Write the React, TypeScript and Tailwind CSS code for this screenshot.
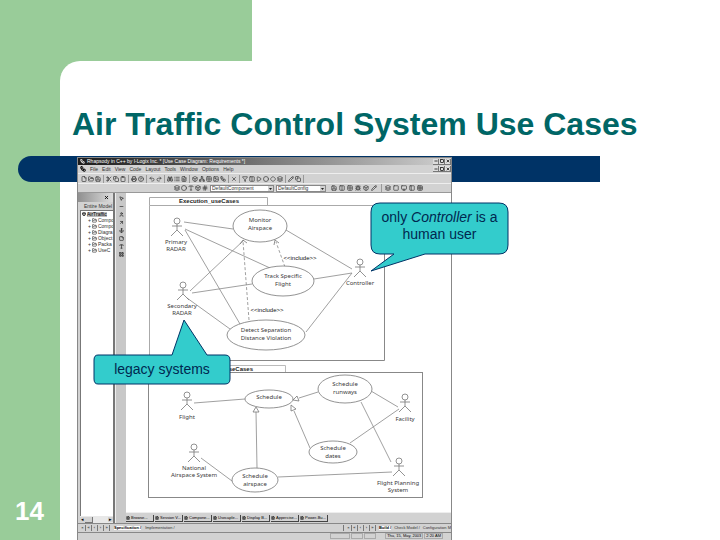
import React from 'react';
import {
  File, FolderOpen, Save, Scissors, Copy, Clipboard, Printer, HelpCircle, Undo2, Redo2, Binoculars,
  List, FileText, Box, Network, Grid2x2, Image as ImageIcon, Workflow, X, Filter, Columns2, Play, Circle,
  Square, Diamond, Pencil, MousePointer2, Minus, User, ArrowUpRight, Layers, Anchor, StickyNote, Type,
  LayoutGrid, Table, Hash, PanelLeft, Bug, Monitor,
} from 'lucide-react';

type Icon = React.ComponentType<{ className?: string; strokeWidth?: number }>;
type Point = [number, number];

const menus = ['File', 'Edit', 'View', 'Code', 'Layout', 'Tools', 'Window', 'Options', 'Help'];

const mainTools: { name: string; icons: Icon[] }[] = [
  { name: 'File', icons: [File, FolderOpen, Save] },
  { name: 'Clipboard', icons: [Scissors, Copy, Clipboard] },
  { name: 'Print', icons: [Printer, HelpCircle] },
  { name: 'History', icons: [Undo2, Redo2] },
  { name: 'Search', icons: [Binoculars, List, FileText] },
  { name: 'Diagrams', icons: [Box, Network, Grid2x2, ImageIcon, Workflow] },
  { name: 'Close', icons: [X] },
  { name: 'Arrange', icons: [Filter, Columns2, Play, Circle, Diamond, Layers] },
  { name: 'Edit', icons: [Pencil, Copy] },
];

const buildTools: Icon[] = [Save, Columns2, Grid2x2, Bug, Box, Pencil];
const viewTools: Icon[] = [Layers, Square, Monitor, PanelLeft, Table];
const drawTools: Icon[] = [MousePointer2, Minus, User, ArrowUpRight, Anchor, StickyNote, Type, LayoutGrid];
const tree = ['Compo', 'Compo', 'Diagra', 'Object', 'Packa', 'UseC'];
const openWindows = ['Browse...', 'Session V...', 'Compone...', 'Usecaple...', 'Display B...', 'Appercise...', 'Power-Bu...'];

const ToolButton = ({ icon: Glyph, label }: { icon: Icon; label: string }) => (
  <button type="button" aria-label={label} className="flex h-2 w-[7px] items-center justify-center text-[#444]">
    <Glyph className="h-[6px] w-[6px]" strokeWidth={3} />
  </button>
);

const WindowButtons = () => (
  <div className="flex text-[#222]">
    {[Minus, Square, X].map((Glyph, i) => (
      <button key={i} type="button" aria-label={['Minimize', 'Restore', 'Close'][i]} className="flex h-[6px] w-[6px] items-center justify-center border-r border-b border-[#777] bg-[#ddd]">
        <Glyph className="h-1 w-1" strokeWidth={5} />
      </button>
    ))}
  </div>
);

const PageButtons = () => (
  <span className="flex">
    {['×', '«', '‹', '›', '»'].map((c) => (
      <button key={c} type="button" className="h-[6px] w-[6px] border-r border-[#777] text-black">{c}</button>
    ))}
  </span>
);

const Picker = ({ label, value }: { label: string; value: string }) => (
  <div className="flex h-[7px] border border-[#888] bg-white">
    <select aria-label={label} className="w-full appearance-none bg-white pl-px">
      <option>{value}</option>
    </select>
    <svg viewBox="0 0 5 5" className="h-[5px] w-[5px] shrink-0 bg-[#d2d2d2]" aria-hidden="true">
      <path d="M1 2h3L2.500 4z" fill="#222" />
    </svg>
  </div>
);

/* ---- Diagram ---- */

const Label = ({ x, y, lines, step = 8 }: { x: number; y: number; lines: string[]; step?: number }) => (
  <text textAnchor="middle" fill="#3a3a3a">
    {lines.map((line, i) => (
      <tspan key={line} x={x} y={y + i * step}>{line}</tspan>
    ))}
  </text>
);

const Actor = ({ x, y, labelY, labelX = x, lines }: { x: number; y: number; labelY: number; labelX?: number; lines: string[] }) => (
  <g>
    <g fill="none" stroke="#777" strokeWidth="0.8">
      <circle cx={x} cy={y} r="3" />
      <path d={`M${x} ${y + 3}v6M${x - 5} ${y + 5}h10M${x - 6} ${y + 15}l6 -6l6 6`} />
    </g>
    <Label x={labelX} y={labelY} lines={lines} step={7} />
  </g>
);

const UseCase = ({ cx, cy, rx, ry, y, lines }: { cx: number; cy: number; rx: number; ry: number; y: number; lines: string[] }) => (
  <g>
    <ellipse cx={cx} cy={cy} rx={rx} ry={ry} fill="white" stroke="#777" strokeWidth="0.8" />
    <Label x={cx} y={y} lines={lines} />
  </g>
);

const links: [Point, Point][] = [
  [[184, 222], [233, 229]],
  [[185, 229], [270, 268]],
  [[185, 230], [240, 324]],
  [[190, 291], [244, 240]],
  [[192, 293], [252, 284]],
  [[187, 298], [230, 329]],
  [[286, 230], [352, 269]],
  [[314, 279], [352, 273]],
  [[306, 332], [352, 273]],
  [[194, 403], [245, 399]],
  [[201, 458], [232, 481]],
  [[257, 468], [256, 412]],
  [[310, 448], [294, 411]],
  [[318, 392], [299, 398]],
  [[371, 391], [398, 407]],
  [[350, 443], [399, 409]],
  [[361, 402], [391, 462]],
  [[278, 477], [392, 472]],
];

const Diagram = () => (
  <svg
    viewBox="126 193 325 319"
    preserveAspectRatio="xMinYMin meet"
    className="block h-[319px] w-full bg-white font-['Noto_Sans','Liberation_Sans',sans-serif] text-[6px]"
    role="img"
    aria-label="Use case diagram"
  >
    <g fill="none" stroke="#999">
      <path d="M149.500 205.500V197.500H267.500V205.500" stroke="#aaa" />
      <path d="M149.500 360.500V205.500H384.500" stroke="#aaa" />
      <path d="M384.500 205.500V360.500H149.500" stroke="#888" />
      <path d="M149.500 372.500V365.500H285.500V372.500" stroke="#bbb" />
      <rect x="148.500" y="372.500" width="274" height="125" stroke="#888" />
    </g>
    <g fontWeight="bold" fill="#222" className="font-['Liberation_Sans',sans-serif]">
      <text x="209" y="203" textAnchor="middle">Execution_useCases</text>
      <text x="253" y="371" textAnchor="end">useCases</text>
    </g>

    <g stroke="#888" strokeWidth="0.8">
      {links.map(([a, b], i) => (
        <line key={i} x1={a[0]} y1={a[1]} x2={b[0]} y2={b[1]} />
      ))}
      <path d="M285 267L276 242M249 320L243 241" strokeDasharray="3 2" fill="none" />
    </g>

    <UseCase cx={260} cy={226} rx={27} ry={16} y={222} lines={['Monitor', 'Airspace']} />
    <UseCase cx={283} cy={281} rx={31} ry={15} y={278} lines={['Track Specific', 'Flight']} />
    <UseCase cx={266} cy={335} rx={39} ry={15} y={332} lines={['Detect Separation', 'Distance Violation']} />
    <UseCase cx={269} cy={399} rx={24} ry={9} y={399} lines={['Schedule']} />
    <UseCase cx={345} cy={389} rx={27} ry={14} y={386} lines={['Schedule', 'runways']} />
    <UseCase cx={333} cy={452} rx={24} ry={11} y={450} lines={['Schedule', 'dates']} />
    <UseCase cx={255} cy={480} rx={23} ry={12} y={478} lines={['Schedule', 'airspace']} />

    {/* arrow heads */}
    <g fill="white" stroke="#777" strokeWidth="0.8">
      <path d="M256 407l-3 5h6z" />
      <path d="M291 405l0 6l5 -2z" />
      <path d="M293 400l4 -4l2 5z" />
      <path d="M240 244l3 -4l4 3M274 245l1 -5l4 3" fill="none" />
    </g>

    <Actor x={177} y={221} labelX={176} labelY={244} lines={['Primary', 'RADAR']} />
    <Actor x={183} y={285} labelX={182} labelY={308} lines={['Secondary', 'RADAR']} />
    <Actor x={360} y={262} labelY={285} lines={['Controller']} />
    <Actor x={187} y={395} labelY={419} lines={['Flight']} />
    <Actor x={405} y={397} labelY={421} lines={['Facility']} />
    <Actor x={194} y={447} labelY={470} lines={['National', 'Airspace System']} />
    <Actor x={399} y={461} labelX={398} labelY={485} lines={['Flight Planning', 'System']} />

    <g fill="#111" textAnchor="middle" className="font-['Liberation_Sans',sans-serif]">
      <text x="300" y="260">{'<<include>>'}</text>
      <text x="267" y="312">{'<<include>>'}</text>
    </g>
  </svg>
);

/* ---- Modelling tool window ---- */

const AppWindow = () => (
  <div className="relative flex w-full max-w-[375px] flex-1 flex-col border-x border-t border-[#888] bg-[#d2d2d2] font-['Liberation_Sans',sans-serif] text-[5px] leading-none text-[#333]">
    <div className="flex h-[7px] items-center justify-between bg-linear-to-r from-[#1c1c1c] via-[#777] to-[#d0d0d0] pl-[2px] text-white">
      <span className="flex items-center gap-[2px] whitespace-nowrap">
        <Workflow className="h-[5px] w-[5px]" strokeWidth={3} />
        Rhapsody in C++ by I-Logix Inc. * [Use Case Diagram: Requirements *]
      </span>
      <WindowButtons />
    </div>

    <div className="flex h-2 items-center justify-between pl-[2px]">
      <nav className="flex items-center gap-1">
        <Workflow className="h-[6px] w-[6px] text-black" strokeWidth={4} />
        {menus.map((m) => (
          <button key={m} type="button">{m}</button>
        ))}
      </nav>
      <WindowButtons />
    </div>

    <div className="flex h-[10px] items-center border-t border-[#eee] pl-[2px]">
      {mainTools.map((group) => (
        <div key={group.name} className="mr-px flex border-r border-[#999] pr-[2px]">
          {group.icons.map((icon, i) => (
            <ToolButton key={i} icon={icon} label={`${group.name} ${i + 1}`} />
          ))}
        </div>
      ))}
    </div>

    <div className="flex h-[10px] items-center gap-[2px] border-y border-t-[#eee] border-b-[#999] pl-[95px]">
      <div className="flex">
        {[Layers, Circle, Type, Box, Hash].map((icon, i) => (
          <ToolButton key={i} icon={icon} label={`Run ${i + 1}`} />
        ))}
      </div>
      <div className="w-[64px]">
        <Picker label="Component" value="DefaultComponent" />
      </div>
      <div className="w-[50px]">
        <Picker label="Configuration" value="DefaultConfig" />
      </div>
      <div className="ml-[2px] flex gap-px border-r border-[#999] pr-1">
        {buildTools.map((icon, i) => (
          <ToolButton key={i} icon={icon} label={`Build ${i + 1}`} />
        ))}
      </div>
      <div className="flex gap-px">
        {viewTools.map((icon, i) => (
          <ToolButton key={i} icon={icon} label={`View ${i + 1}`} />
        ))}
      </div>
    </div>

    <div className="flex">
      <div className="flex w-[37px] shrink-0 flex-col overflow-hidden border-r-2 border-[#777]">
        <div className="flex h-[9px] items-center justify-end bg-linear-to-r from-[#909090] to-[#ddd] pr-1">
          <X className="h-[5px] w-[5px] text-black" strokeWidth={4} />
        </div>
        <div className="flex h-2 items-center pl-[6px] whitespace-nowrap">Entire Model</div>
        <div className="ml-[2px] flex-1 overflow-hidden border-t border-l border-[#777] bg-white">
          <div className="flex h-[6px] items-center gap-px pl-px whitespace-nowrap text-black">
            <Box className="h-1 w-1 shrink-0" strokeWidth={4} />
            <span className="bg-[#bbb]">AirTraffic</span>
          </div>
          <ul className="pl-[7px]">
            {tree.map((item, i) => (
              <li key={i} className="flex h-[6px] items-center gap-px">
                <span>+</span>
                <FolderOpen className="h-[5px] w-[5px] shrink-0" strokeWidth={3} />
                {item}
              </li>
            ))}
          </ul>
        </div>
        <div className="ml-[2px] flex h-[7px] items-center justify-between bg-[#e8e8e8] text-black">
          <span className="flex">
            <span className="bg-[#d2d2d2] px-px">◂</span>
            <span className="h-[6px] w-2 border-r border-b border-[#777] bg-[#d2d2d2]" />
          </span>
          <span className="bg-[#d2d2d2] px-px">▸</span>
        </div>
      </div>

      <div className="flex w-[11px] shrink-0 flex-col items-center gap-px border-l border-[#eee] bg-[#c8c8c8] pt-[2px]">
        {drawTools.map((Glyph, i) => (
          <button key={i} type="button" aria-label={`Draw ${i + 1}`} className="flex h-[7px] w-[7px] items-center justify-center text-[#222]">
            <Glyph className="h-[5px] w-[5px]" strokeWidth={3} />
          </button>
        ))}
      </div>

      <div className="min-w-0 flex-1">
        <Diagram />
        <div className="flex h-[11px] items-center gap-px border-t border-[#eee] text-[4px] text-black">
          {openWindows.map((w) => (
            <button key={w} type="button" className="flex h-[7px] w-7 items-center gap-px border-r border-b border-[#444] whitespace-nowrap">
              <FileText className="h-1 w-1 shrink-0" strokeWidth={3} />
              {w}
            </button>
          ))}
        </div>
      </div>
    </div>

    <div className="flex h-[10px] items-center justify-between overflow-hidden border-y border-[#888] text-[4px] whitespace-nowrap">
      <div className="flex items-center gap-1 pl-[2px]">
        <PageButtons />
        <button type="button" className="bg-white font-bold text-black">Specification /</button>
        <button type="button">Implementation /</button>
      </div>
      <div className="flex items-center gap-[3px] border-l border-[#777] pl-[2px]">
        <PageButtons />
        <button type="button" className="bg-white font-bold text-black">Build /</button>
        <button type="button">Check Model /</button>
        <button type="button">Configuration M</button>
      </div>
    </div>

    <div className="flex flex-1 items-start justify-end gap-px pr-2 text-[4px] text-black">
      <span className="h-[6px] w-5 border border-[#aaa]" />
      <span className="h-[6px] w-3 border border-[#aaa]" />
      <span className="mr-2 h-[6px] w-3 border border-[#aaa]" />
      <span className="border border-[#aaa] px-px">Thu, 15, May, 2003</span>
      <span className="border border-[#aaa] px-px">2:20 AM</span>
    </div>
  </div>
);

export default function App() {
  return (
    <div className="flex min-h-screen flex-col overflow-hidden bg-white font-['Liberation_Sans',Arial,sans-serif]">
      <div className="h-[61px] w-[35%] bg-[#99cc99]" />

      <div className="flex flex-1 bg-[#99cc99]">
        <aside className="flex w-[60px] shrink-0 items-end pb-[13px] pl-[15px]">
          <span className="text-[26px] leading-8 font-bold text-white">14</span>
        </aside>

        <main className="flex min-w-0 flex-1 flex-col rounded-tl-[20px] bg-white pt-[43px]">
          <h1 className="pl-3 text-[32px] leading-10 font-bold text-[#006666]">Air Traffic Control System Use Cases</h1>

          <section className="relative mt-3 flex flex-1 flex-col pt-px pl-[17px]">
            <div className="absolute top-0 right-[120px] -left-[42px] h-[26px] rounded-l-full bg-[#003366]" />
            <AppWindow />

            {/* Callouts sit over the window */}
            <div className="absolute top-[46px] left-[310px] h-[70px] w-[139px] text-[#002850]">
              <svg viewBox="0 0 139 70" className="absolute inset-0 h-full w-full" aria-hidden="true">
                <path d="M10 1H129Q138 1 138 10V43Q138 52 129 52H55L1 69L24 52H10Q1 52 1 43V10Q1 1 10 1Z" fill="#33cccc" stroke="#003366" />
              </svg>
              <p className="relative pt-[7px] text-center text-[14px] leading-[17px]">
                only <em>Controller</em> is a<br />human user
              </p>
            </div>

            <div className="absolute top-[163px] left-[33px] h-[66px] w-[138px] text-[#002850]">
              <svg viewBox="0 0 138 66" className="absolute inset-0 h-full w-full" aria-hidden="true">
                <path d="M5 36H79L91 1L114 36H132Q137 36 137 41V60Q137 65 132 65H5Q1 65 1 60V41Q1 36 5 36Z" fill="#33cccc" stroke="#003366" />
              </svg>
              <p className="relative pt-[42px] text-center text-[14px] leading-[17px]">legacy systems</p>
            </div>
          </section>
        </main>
      </div>
    </div>
  );
}
